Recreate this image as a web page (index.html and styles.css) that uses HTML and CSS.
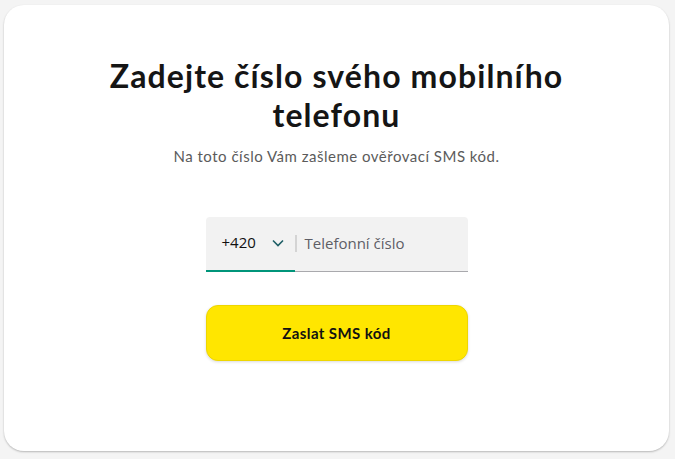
FILE: index.html
```html
<!DOCTYPE html>
<html lang="cs">
<head>
<meta charset="utf-8">
<link rel="stylesheet" href="styles.css">
</head>
<body>
<main class="card">
  <h1 class="title">Zadejte číslo svého mobilního telefonu</h1>
  <p class="subtitle">Na toto číslo Vám zašleme ověřovací SMS kód.</p>
  <div class="phone">
    <div class="prefix">
      <span class="code">+420</span>
      <svg class="chev" width="12" height="8" viewBox="0 0 12 8"><path d="M1 1.5 L6 6.5 L11 1.5" fill="none" stroke="#1f5f66" stroke-width="1.6"/></svg>
    </div>
    <span class="sep"></span>
    <span class="placeholder">Telefonní číslo</span>
  </div>
  <button class="submit">Zaslat SMS kód</button>
</main>
</body>
</html>
```
FILE: styles.css
```css
html, body { margin: 0; padding: 0; }
body {
  background: #f4f4f4;
  width: 675px;
  height: 459px;
  padding: 5px 6px 8px 4px;
  box-sizing: border-box;
  font-family: Lato, "Noto Sans", sans-serif;
}
.card {
  background: #fff;
  border-radius: 20px;
  height: 446px;
  box-shadow: 0 1px 2px rgba(0,0,0,0.25);
  display: flex;
  flex-direction: column;
  align-items: center;
  padding-top: 51px;
  box-sizing: border-box;
}
.title {
  margin: 0;
  width: 500px;
  text-align: center;
  font-size: 32px;
  line-height: 39px;
  font-weight: 700;
  color: #151515;
  letter-spacing: 1.1px;
}
.subtitle {
  margin: 13px 0 0;
  font-size: 15px;
  line-height: 18px;
  color: #5b5b5b;
  letter-spacing: 0.5px;
}
.phone {
  margin-top: 52px;
  width: 262px;
  height: 55px;
  background: #f2f2f2;
  border-radius: 4px 4px 0 0;
  border-bottom: 1px solid #a9a9ad;
  display: flex;
  align-items: center;
  box-sizing: border-box;
  font-family: "Open Sans", "Liberation Sans", sans-serif;
}
.prefix {
  width: 89px;
  height: 100%;
  display: flex;
  align-items: center;
  box-sizing: border-box;
  padding-left: 16px;
  border-bottom: 2px solid #00957a;
  margin-bottom: -2px;
}
.code {
  font-size: 15px;
  color: #111;
  margin-top: -4px;
}
.chev { margin-left: 16px; margin-top: -2px; }
.sep {
  width: 2px;
  height: 17px;
  background: #d4d4d4;
  margin-top: -2px;
}
.placeholder {
  margin-left: 8px;
  font-size: 15px;
  color: #5e5e66;
  margin-top: -2px;
}
.submit {
  margin-top: 33px;
  width: 262px;
  height: 56px;
  background: #ffe600;
  border: 1px solid #eed600;
  border-radius: 12px;
  box-shadow: 0 1px 3px rgba(0,0,0,0.15);
  font-family: Lato, "Noto Sans", sans-serif;
  font-weight: 700;
  font-size: 15px;
  letter-spacing: 0.4px;
  color: #111;
}
```
